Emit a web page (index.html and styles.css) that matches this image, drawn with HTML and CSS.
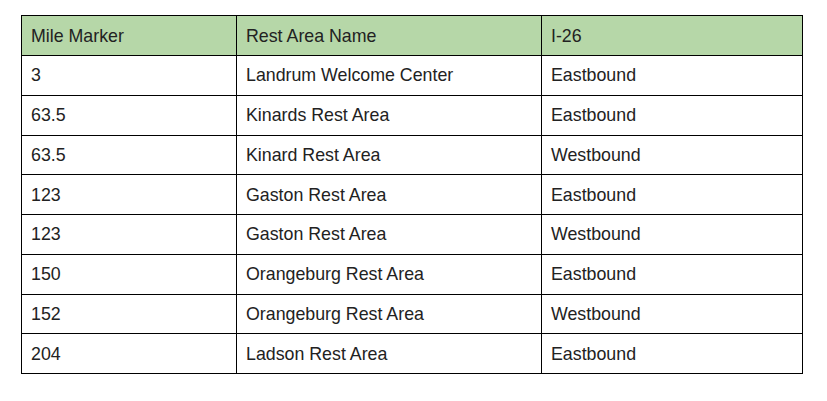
FILE: index.html
```html
<!DOCTYPE html>
<html>
<head>
<meta charset="utf-8">
<link rel="stylesheet" href="styles.css">
</head>
<body>
<table class="rest-table">
  <colgroup>
    <col class="c1"><col class="c2"><col class="c3">
  </colgroup>
  <thead>
    <tr><th>Mile Marker</th><th>Rest Area Name</th><th>I-26</th></tr>
  </thead>
  <tbody>
    <tr><td>3</td><td>Landrum Welcome Center</td><td>Eastbound</td></tr>
    <tr><td>63.5</td><td>Kinards Rest Area</td><td>Eastbound</td></tr>
    <tr><td>63.5</td><td>Kinard Rest Area</td><td>Westbound</td></tr>
    <tr><td>123</td><td>Gaston Rest Area</td><td>Eastbound</td></tr>
    <tr><td>123</td><td>Gaston Rest Area</td><td>Westbound</td></tr>
    <tr><td>150</td><td>Orangeburg Rest Area</td><td>Eastbound</td></tr>
    <tr><td>152</td><td>Orangeburg Rest Area</td><td>Westbound</td></tr>
    <tr><td>204</td><td>Ladson Rest Area</td><td>Eastbound</td></tr>
  </tbody>
</table>
</body>
</html>
```
FILE: styles.css
```css
html, body {
  margin: 0;
  background: #ffffff;
}
body {
  padding: 15px 0 0 21px;
  font-family: "Liberation Sans", Arial, sans-serif;
  font-size: 17.8px;
  color: #222222;
}
.rest-table {
  border-collapse: collapse;
  table-layout: fixed;
  width: 781px;
}
.c1 { width: 215px; }
.c2 { width: 305px; }
.c3 { width: 261px; }
.rest-table th,
.rest-table td {
  border: 1px solid #000000;
  height: 39.75px;
  padding: 1px 9px 0 9px;
  text-align: left;
  font-weight: normal;
  vertical-align: middle;
  box-sizing: border-box;
}
.rest-table thead th {
  background: #b6d7a8;
  height: 40px;
}
```
